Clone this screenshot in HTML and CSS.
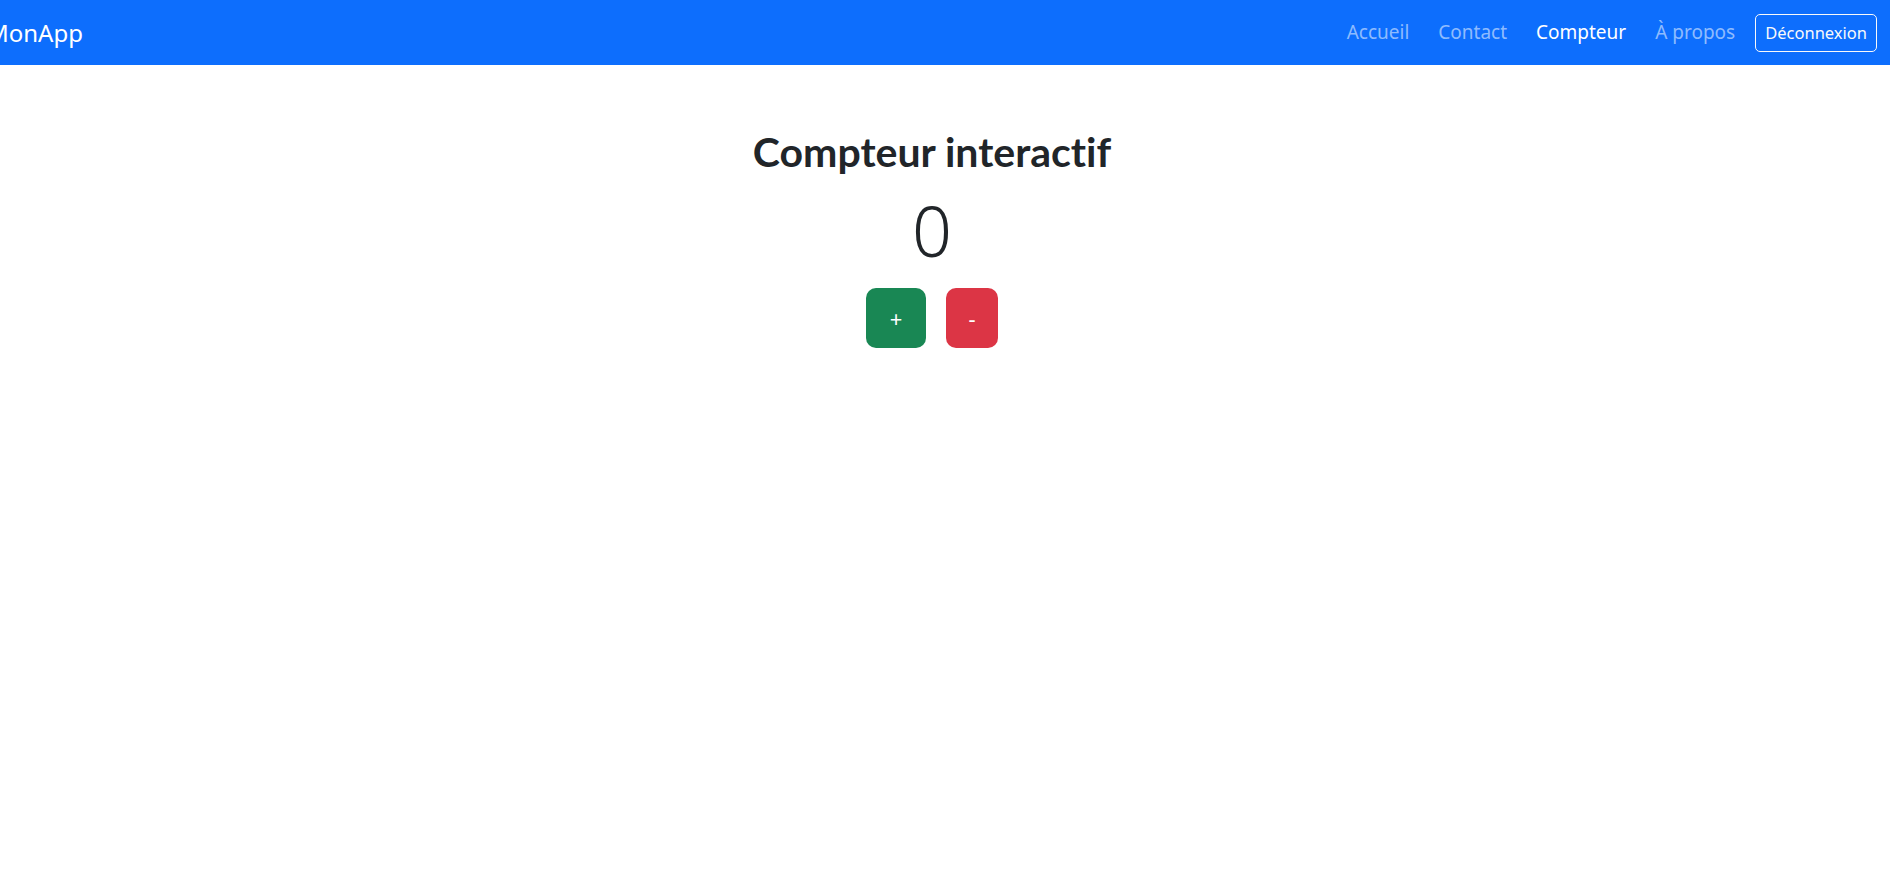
FILE: index.html
```html
<!DOCTYPE html>
<html lang="fr">
<head>
<meta charset="utf-8">
<title>MonApp</title>
<link rel="stylesheet" href="styles.css">
</head>
<body>
<nav class="navbar">
  <a class="brand" href="#">MonApp</a>
  <div class="nav-right">
    <ul class="nav-links">
      <li><a class="nav-link" href="#">Accueil</a></li>
      <li><a class="nav-link" href="#">Contact</a></li>
      <li><a class="nav-link active" href="#">Compteur</a></li>
      <li><a class="nav-link" href="#">À propos</a></li>
    </ul>
    <button class="btn-logout" type="button">Déconnexion</button>
  </div>
</nav>
<main class="main">
  <h2 class="title">Compteur interactif</h2>
  <div class="counter">0</div>
  <div class="actions">
    <button class="btn btn-plus" type="button">+</button>
    <button class="btn btn-minus" type="button">-</button>
  </div>
</main>
</body>
</html>
```

FILE: styles.css
```css
* {
  box-sizing: border-box;
}

html, body {
  margin: 0;
  padding: 0;
  background: #ffffff;
}

body {
  font-family: "Noto Sans", "Open Sans", sans-serif;
  color: #212529;
  overflow: hidden;
}

.navbar {
  height: 65px;
  background: #0d6efd;
  display: flex;
  align-items: center;
  justify-content: space-between;
  padding: 0 13px 0 0;
}

.brand {
  margin-left: -13px;
  color: #ffffff;
  font-size: 24px;
  text-decoration: none;
  line-height: 1;
}

.nav-right {
  display: flex;
  align-items: center;
  gap: 10px;
}

.nav-links {
  list-style: none;
  margin: 0;
  padding: 0;
  display: flex;
  align-items: center;
}

.nav-link {
  display: block;
  padding: 0 10px 2px 10px;
  margin-left: 9px;
  font-size: 19px;
  color: rgba(255, 255, 255, 0.55);
  text-decoration: none;
}

.nav-link.active {
  color: #ffffff;
}

.btn-logout {
  height: 38px;
  padding: 0 9px 1px 9px;
  font-family: inherit;
  font-size: 16.5px;
  color: #f8f9fa;
  background: transparent;
  border: 1px solid #f8f9fa;
  border-radius: 5px;
}

.main {
  display: flex;
  flex-direction: column;
  align-items: center;
  padding-right: 26px;
}

.title {
  margin: 63px 0 0 0;
  font-family: "Lato", "Noto Sans", sans-serif;
  font-size: 41px;
  font-weight: 700;
  line-height: 48px;
  font-variant-ligatures: none;
}

.counter {
  margin-top: 12px;
  font-size: 70px;
  font-weight: 300;
  line-height: 84px;
}

.actions {
  margin-top: 16px;
  display: flex;
  gap: 20px;
}

.btn {
  height: 60px;
  border: none;
  border-radius: 10px;
  color: #ffffff;
  font-family: inherit;
  font-size: 22px;
  display: flex;
  align-items: center;
  justify-content: center;
}

.btn-plus {
  width: 60px;
  background: #198754;
}

.btn-minus {
  width: 52px;
  background: #dc3545;
}
```
